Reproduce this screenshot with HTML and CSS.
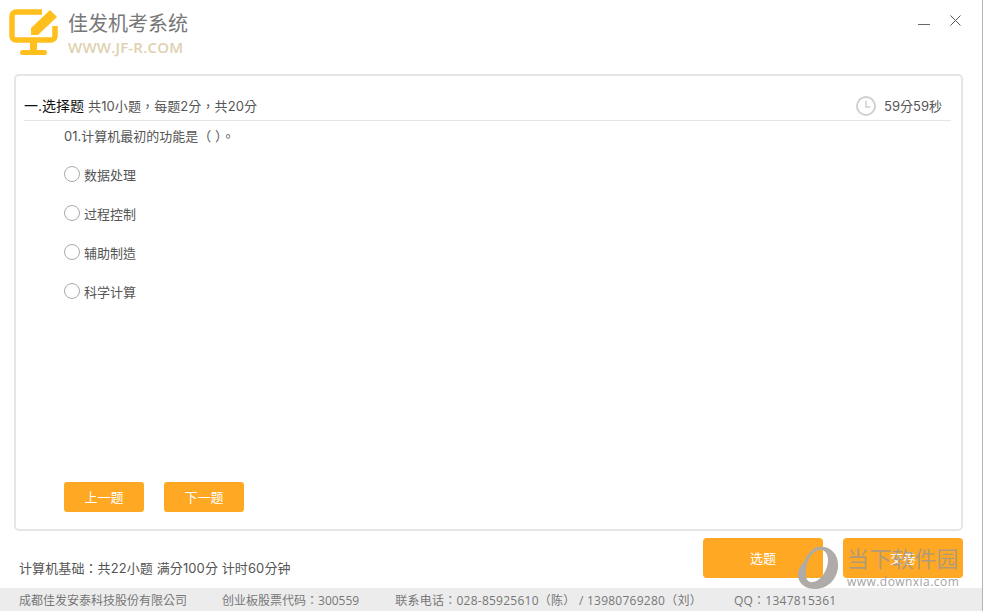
FILE: index.html
```html
<!DOCTYPE html>
<html lang="zh-TW">
<head>
    <meta charset="UTF-8">
    <meta name="viewport" content="width=device-width, initial-scale=1.0">
    <title>佳发机考系统</title>
    <link rel="stylesheet" href="styles.css">
</head>
<body>
    <div class="app">
      <header class="top-bar">
        <div class="brand">
          <svg class="logo" width="50" height="46" viewBox="0 0 50 46">
            <path d="M33 3H7a4 4 0 0 0-4 4v20a4 4 0 0 0 4 4h35a4 4 0 0 0 4-4V17" fill="none" stroke="#ffc01e" stroke-width="5.500"/>
            <path d="M22 19L41 1l7 7-19 18h-7z" fill="#ffc01e"/>
            <rect x="21" y="33" width="7" height="9" fill="#ffc01e"/>
            <rect x="11" y="41" width="27" height="5" rx="2.500" fill="#ffc01e"/>
          </svg>
          <div class="brand-text">
            <div class="brand-name">佳发机考系统</div>
            <div class="brand-url">WWW.JF-R.COM</div>
          </div>
        </div>
        <div class="window-buttons">
          <svg width="12" height="12" viewBox="0 0 12 12"><path d="M0 9.500h12" stroke="#666" fill="none"/></svg>
          <svg width="11" height="11" viewBox="0 0 11 11"><path d="M.5.500l10 10M10.500.500l-10 10" stroke="#555" fill="none"/></svg>
        </div>
      </header>

      <main class="exam-card">
        <div class="section-head">
          <div class="section-info"><span class="section-title">一.选择题</span>共10小题，每题2分，共20分</div>
          <div class="timer">
            <svg width="20" height="20" viewBox="0 0 20 20"><circle cx="10" cy="10" r="9" fill="none" stroke="#d0d0d0" stroke-width="2"/><path d="M10 5v6h4.500" fill="none" stroke="#d0d0d0" stroke-width="1.500"/></svg>
            <span>59分59秒</span>
          </div>
        </div>
        <div class="question">
          <p class="question-text">01.计算机最初的功能是（ ）。</p>
          <label class="option"><span class="radio"></span>数据处理</label>
          <label class="option"><span class="radio"></span>过程控制</label>
          <label class="option"><span class="radio"></span>辅助制造</label>
          <label class="option"><span class="radio"></span>科学计算</label>
        </div>
        <div class="pager">
          <button class="btn">上一题</button>
          <button class="btn">下一题</button>
        </div>
      </main>

      <div class="summary-row">
        <div class="summary">计算机基础：共22小题 满分100分 计时60分钟</div>
        <div class="actions">
          <button class="btn btn-large">选题</button>
          <button class="btn btn-large">交卷</button>
        </div>
      </div>

      <footer class="footer">
        <span class="company">成都佳发安泰科技股份有限公司</span>
        <span class="stock">创业板股票代码：300559</span>
        <span class="phone">联系电话：028-85925610（陈） / 13980769280（刘）</span>
        <span class="qq">QQ：1347815361</span>
      </footer>

      <div class="watermark">
        <svg class="watermark-logo" width="44" height="46" viewBox="0 0 44 46">
          <path fill-rule="evenodd" d="M23 1C35-1 44 8 43 21 42 34 32 43 20 43 10 43 3 37 3 29 3 24 6 19 9 16 12 9 17 2 23 1ZM24 4C17 5 12 14 11 24 10 33 13 37 18 36 26 35 33 24 33 14 33 7 29 3 24 4Z" fill="#aeaba8"/>
        </svg>
        <div class="watermark-text">
          <div class="watermark-name">当下软件园</div>
          <div class="watermark-url">www.downxia.com</div>
        </div>
      </div>
    </div>
</body>
</html>
```

FILE: styles.css
```css
* {
  box-sizing: border-box;
}

body {
  margin: 0;
  background-color: #fff;
  font-family: Inter, "Noto Sans CJK TC", sans-serif;
  font-size: 13px;
  color: #555;
}

.app {
  position: relative;
  display: flex;
  flex-direction: column;
  width: 983px;
  height: 611px;
  overflow: hidden;
  border-right: 1px solid #b4b4b4;
}

.top-bar {
  display: flex;
  justify-content: space-between;
  height: 74px;
  padding: 9px 21px 0 9px;
}

.brand {
  display: flex;
}

.logo {
  width: 50px;
  height: 46px;
  margin-right: 9px;
}

.brand-name {
  margin-top: 1px;
  font-size: 20px;
  line-height: 28px;
  color: #777;
}

.brand-url {
  font-family: "Open Sans", sans-serif;
  font-size: 15px;
  font-weight: 600;
  line-height: 18px;
  letter-spacing: 0.2px;
  color: #e0d0b0;
}

.window-buttons {
  display: flex;
  gap: 20px;
  padding-top: 6px;
}

.exam-card {
  display: flex;
  flex-direction: column;
  width: 949px;
  height: 457px;
  margin-left: 14px;
  border: 2px solid #e6e6e6;
  border-radius: 5px;
  background-color: #fff;
}

.section-head {
  display: flex;
  justify-content: space-between;
  align-items: center;
  height: 45px;
  margin: 0 10px 0 8px;
  padding: 15px 9px 0 0;
  border-bottom: 1px solid #e4e4e4;
}

.section-info {
  margin-bottom: 2px;
  letter-spacing: 0.1px;
}

.section-title {
  margin-right: 4px;
  font-size: 14px;
  letter-spacing: 0;
  color: #111;
}

.timer {
  display: flex;
  align-items: center;
  gap: 8px;
}

.question {
  flex: 1;
  padding-left: 48px;
}

.question-text {
  margin: 6px 0 0;
  line-height: 18px;
}

.option {
  display: flex;
  align-items: center;
  height: 39px;
  padding-top: 2px;
}

.option:first-of-type {
  margin-top: 9px;
}

.radio {
  width: 16px;
  height: 16px;
  margin-top: -2px;
  margin-right: 4px;
  border: 1px solid #aaa;
  border-radius: 50%;
}

.pager {
  display: flex;
  gap: 20px;
  padding: 0 0 17px 48px;
}

.btn {
  width: 80px;
  height: 30px;
  padding: 0 0 2px;
  border: none;
  border-radius: 3px;
  background-color: #ffa823;
  color: #fff;
  font-family: inherit;
  font-size: 13px;
}

.summary-row {
  display: flex;
  justify-content: space-between;
  height: 57px;
  padding: 7px 19px 0 19px;
}

.summary {
  padding-top: 21px;
  line-height: 18px;
  letter-spacing: 0.1px;
}

.actions {
  display: flex;
  gap: 20px;
}

.btn-large {
  width: 120px;
  height: 40px;
  border-radius: 4px;
}

.footer {
  display: flex;
  align-items: center;
  height: 23px;
  padding-left: 19px;
  background-color: #ececec;
  font-family: "Open Sans", "Noto Sans CJK TC", sans-serif;
  font-size: 12px;
  color: #777;
}

.company {
  margin-right: 35px;
}

.stock {
  margin-right: 36px;
}

.phone {
  margin-right: 32px;
  letter-spacing: 0.25px;
}

.qq {
  letter-spacing: 0.25px;
}

.watermark {
  position: absolute;
  left: 795px;
  top: 546px;
  display: flex;
  gap: 8px;
}

.watermark-logo {
  flex-shrink: 0;
}

.watermark-text {
  width: 116px;
}

.watermark-name {
  font-size: 22px;
  line-height: 26px;
  letter-spacing: 0.4px;
  color: rgba(150, 150, 150, 0.75);
  white-space: nowrap;
}

.watermark-url {
  margin-top: 2px;
  font-family: "Open Sans", sans-serif;
  font-size: 12px;
  line-height: 15px;
  letter-spacing: 0.45px;
  color: rgba(150, 150, 150, 0.9);
  white-space: nowrap;
}
```
